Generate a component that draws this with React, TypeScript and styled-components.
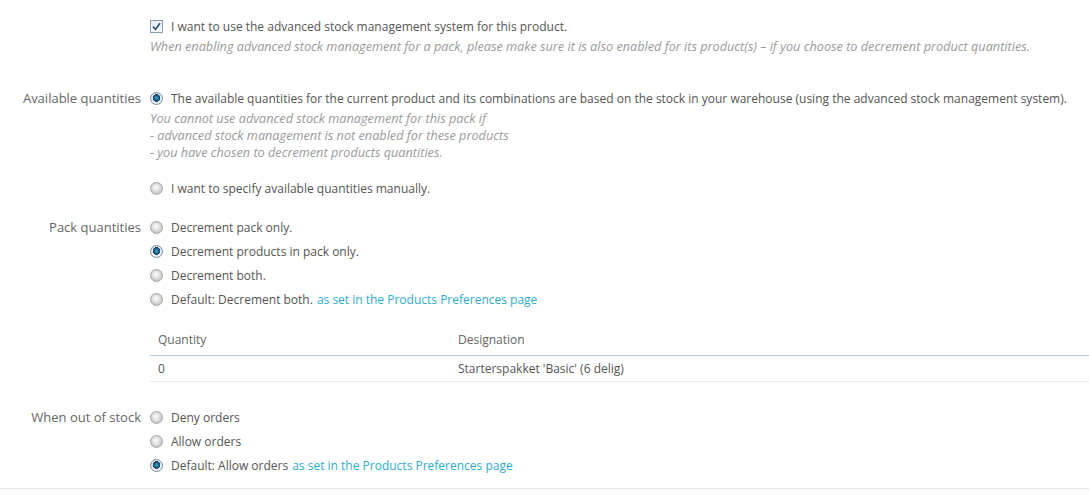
import React from 'react';
import styled, { createGlobalStyle } from 'styled-components';

const GlobalStyle = createGlobalStyle`
  html, body {
    margin: 0;
    padding: 0;
    background: #fff;
  }
  body {
    font-family: 'Open Sans', 'Liberation Sans', sans-serif;
    font-size: 12px;
    color: #555;
  }
`;

const Page = styled.div`
  width: 1089px;
  height: 496px;
  overflow: hidden;
  background: #fafbfc;
`;

const Panel = styled.div`
  background: #fff;
  padding: 14px 0 11px;
  border-bottom: 1px solid #e6e6e6;
`;

const FormRow = styled.div<{ gap?: number }>`
  display: grid;
  grid-template-columns: 141px 1fr;
  column-gap: 9px;
  margin-top: ${(p) => p.gap ?? 0}px;
`;

const Label = styled.div`
  text-align: right;
  color: #666;
  font-size: 13px;
  line-height: 24px;
  white-space: nowrap;
`;

const Controls = styled.div`
  display: flex;
  flex-direction: column;
  min-width: 0;
`;

const Option = styled.label<{ mt?: number }>`
  display: flex;
  align-items: center;
  gap: 8px;
  height: 24px;
  margin-top: ${(p) => p.mt ?? 0}px;
  color: #555;
  white-space: nowrap;
  cursor: pointer;
`;

const RadioMark = styled.span<{ checked?: boolean }>`
  flex: none;
  width: 11px;
  height: 11px;
  border-radius: 50%;
  border: 1px solid ${(p) => (p.checked ? '#7b8a96' : '#a8a8a8')};
  background: ${(p) =>
    p.checked
      ? 'radial-gradient(circle at 50% 45%, #3a9fd0 0, #1c5f86 2.6px, #0d3550 3.6px, #dfe6ec 4px, #f4f6f8 5.5px)'
      : 'radial-gradient(circle at 45% 40%, #fdfdfd 0, #e6e6e6 3px, #cfcfcf 5.5px)'};
  box-shadow: inset 0 0 1px rgba(0, 0, 0, 0.15);
`;

const CheckMark = styled.span`
  flex: none;
  width: 11px;
  height: 11px;
  border: 1px solid #8c9bb0;
  background: linear-gradient(#e9eef4, #f9fbfd);
  display: flex;
  align-items: center;
  justify-content: center;

  svg {
    display: block;
  }
`;

const Help = styled.div<{ mt?: number }>`
  font-style: italic;
  font-size: 12.7px;
  color: #9a9a9a;
  line-height: 17px;
  margin-top: ${(p) => p.mt ?? 0}px;
  white-space: nowrap;
`;

const Link = styled.a`
  color: #2eacce;
  text-decoration: none;
  margin-left: 4px;
`;

const Table = styled.table`
  width: 100%;
  border-collapse: collapse;
  margin-top: 13px;

  th {
    text-align: left;
    font-weight: normal;
    color: #666;
    line-height: 17px;
    padding: 7px 8px;
    border-bottom: 1px solid #b9ccd6;
  }
  td {
    line-height: 17px;
    padding: 4px 8px 4px;
    border-bottom: 1px solid #eaeaea;
    color: #555;
  }
  th:first-child,
  td:first-child {
    width: 284px;
  }
`;

const Radio = ({ checked, children, mt }: { checked?: boolean; children: React.ReactNode; mt?: number }) => (
  <Option mt={mt}>
    <RadioMark checked={checked} />
    <span>{children}</span>
  </Option>
);

const App = () => {
  return (
    <Page>
      <GlobalStyle />
      <Panel>
        <FormRow>
          <Label />
          <Controls>
            <Option>
              <CheckMark>
                <svg width="9" height="9" viewBox="0 0 9 9">
                  <path d="M1 4.6 L3.4 7.4 L8 1.2" fill="none" stroke="#2c4a7a" strokeWidth="1.6" />
                </svg>
              </CheckMark>
              <span>I want to use the advanced stock management system for this product.</span>
            </Option>
            <Help>
              When enabling advanced stock management for a pack, please make sure it is also enabled for its product(s) – if you choose to decrement product quantities.
            </Help>
          </Controls>
        </FormRow>

        <FormRow gap={31}>
          <Label>Available quantities</Label>
          <Controls>
            <Radio checked>
              The available quantities for the current product and its combinations are based on the stock in your warehouse (using the advanced stock management system).
            </Radio>
            <Help>
              You cannot use advanced stock management for this pack if
              <br />- advanced stock management is not enabled for these products
              <br />- you have chosen to decrement products quantities.
            </Help>
            <Radio mt={15}>I want to specify available quantities manually.</Radio>
          </Controls>
        </FormRow>

        <FormRow gap={15}>
          <Label>Pack quantities</Label>
          <Controls>
            <Radio>Decrement pack only.</Radio>
            <Radio checked>Decrement products in pack only.</Radio>
            <Radio>Decrement both.</Radio>
            <Radio>
              Default: Decrement both.
              <Link href="#">as set in the Products Preferences page</Link>
            </Radio>
            <Table>
              <thead>
                <tr>
                  <th>Quantity</th>
                  <th>Designation</th>
                </tr>
              </thead>
              <tbody>
                <tr>
                  <td>0</td>
                  <td>Starterspakket 'Basic' (6 delig)</td>
                </tr>
              </tbody>
            </Table>
          </Controls>
        </FormRow>

        <FormRow gap={23}>
          <Label>When out of stock</Label>
          <Controls>
            <Radio>Deny orders</Radio>
            <Radio>Allow orders</Radio>
            <Radio checked>
              Default: Allow orders
              <Link href="#">as set in the Products Preferences page</Link>
            </Radio>
          </Controls>
        </FormRow>
      </Panel>
    </Page>
  );
};

export default App;
